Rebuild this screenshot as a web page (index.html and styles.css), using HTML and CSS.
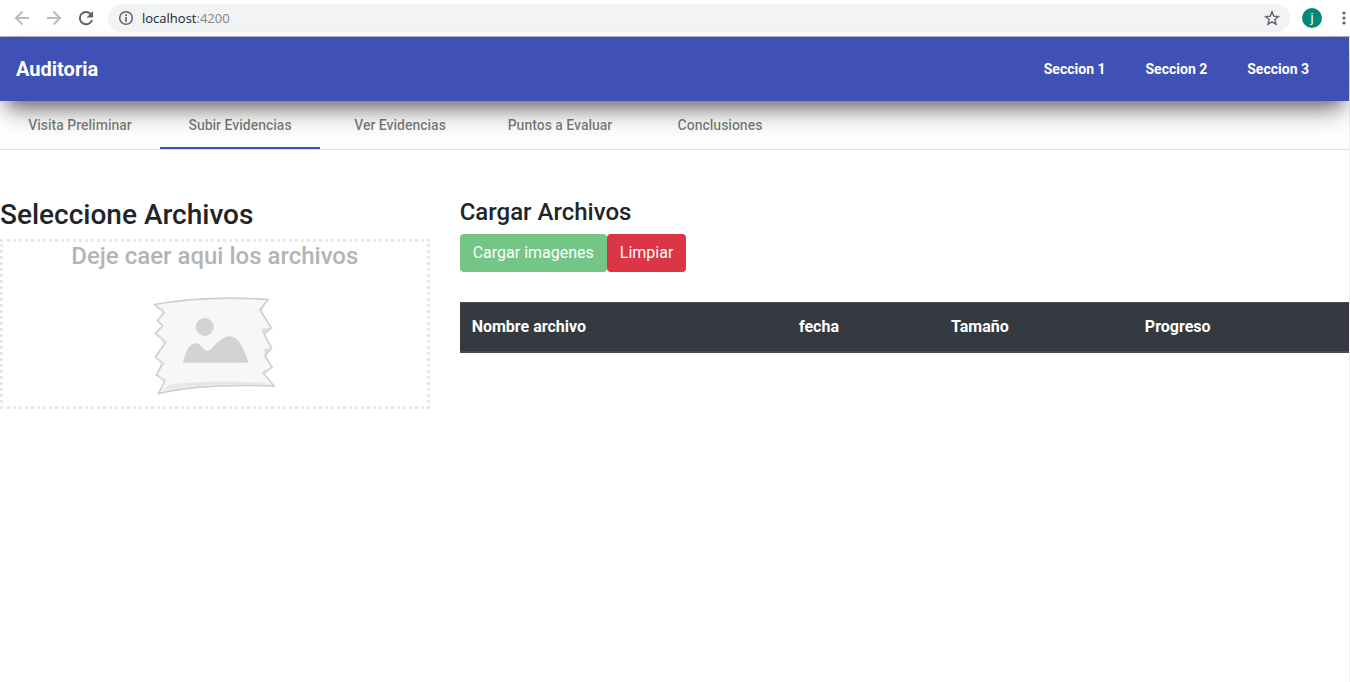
FILE: index.html
```html
<!DOCTYPE html>
<html lang="es">
<head>
<meta charset="utf-8">
<title>Auditoria</title>
<link rel="stylesheet" href="styles.css">
</head>
<body>
<div class="browser">
  <button class="icon-btn" type="button" aria-label="Atrás"><svg width="16" height="16" viewBox="0 0 16 16" fill="none" stroke="#babcbe" stroke-width="2"><path d="M15 8H2.500M8.500 1.500 2 8l6.500 6.500"/></svg></button>
  <button class="icon-btn" type="button" aria-label="Adelante"><svg width="16" height="16" viewBox="0 0 16 16" fill="none" stroke="#babcbe" stroke-width="2"><path d="M1 8h12.500M7.500 1.500 14 8l-6.500 6.500"/></svg></button>
  <button class="icon-btn" type="button" aria-label="Recargar"><svg width="16" height="16" viewBox="0 0 16 16"><path d="M13.200 4.600A6.200 6.200 0 1 0 14 10" fill="none" stroke="#5f6368" stroke-width="2"/><path d="M15 1v6.500H8.500z" fill="#5f6368"/></svg></button>
  <div class="address">
    <svg width="16" height="16" viewBox="0 0 16 16"><circle cx="8" cy="8" r="6.300" fill="none" stroke="#5f6368" stroke-width="1.500"/><path d="M7.200 7h1.700v4.700H7.200zM7.200 4.300h1.700V6H7.200z" fill="#5f6368"/></svg>
    <span class="url">localhost<span class="port">:4200</span></span>
    <button class="star" type="button" aria-label="Marcador"><svg width="16" height="16" viewBox="0 0 16 16" fill="none" stroke="#5f6368" stroke-width="1.400"><path d="m8 1.800 1.800 4.300 4.600.4-3.500 3.100 1.100 4.600L8 11.800l-4 2.400 1.100-4.600L1.600 6.500l4.600-.4z"/></svg></button>
  </div>
  <button class="avatar" type="button">j</button>
  <button class="menu" type="button" aria-label="Menú"><svg width="4" height="14" viewBox="0 0 4 14" fill="#5f6368"><circle cx="2" cy="2" r="1.600"/><circle cx="2" cy="7" r="1.600"/><circle cx="2" cy="12" r="1.600"/></svg></button>
</div>
<div class="page">
  <header class="toolbar">
    <h1 class="brand">Auditoria</h1>
    <nav class="sections">
      <a href="#">Seccion 1</a>
      <a href="#">Seccion 2</a>
      <a href="#">Seccion 3</a>
    </nav>
  </header>
  <nav class="tabs">
    <a class="tab" href="#">Visita Preliminar</a>
    <a class="tab active" href="#">Subir Evidencias</a>
    <a class="tab" href="#">Ver Evidencias</a>
    <a class="tab" href="#">Puntos a Evaluar</a>
    <a class="tab" href="#">Conclusiones</a>
  </nav>
  <main class="content">
    <section>
      <h2 class="title">Seleccione Archivos</h2>
      <div class="dropzone">
        <h3 class="drop-label">Deje caer aqui los archivos</h3>
        <svg class="picture" width="124" height="104" viewBox="0 0 124 104">
          <path d="M1.500 12.500Q55 3 115 7.500L107 18 118.500 36 111 42 118.500 56 112 64 119 75 110.500 81.500 121 94Q50 91 5.500 101.500L12 89 3.500 83 9.500 71.500 2.500 65 12.500 50.500 2.500 41.500 9.500 34 4.500 28.500 11 20.500z" fill="#f7f7f7" stroke="#cfcfcb" stroke-width="1.700"/>
          <path d="M9 99 16 93Q50 87 112 91L118 93Q50 90 9 99z" fill="#e7e7e4"/>
          <path d="m4 13.500 7 4v5zM3.500 41l9 7-1 5zM3.500 65l8 6-2 4zM4.500 83l8 4-1 5zM114 9l-5 9 2 5-4-4zM117 35l-8 2q-1 3 2 5zM118 56l-7 1 1 6zM118 75l-8 4 1 5z" fill="#dededb"/>
          <circle cx="51.700" cy="35" r="9" fill="#d3d3d3"/>
          <path d="M30 70.800C34 52 42 47 49 55 53 60 56 60 60 55 78 35 87 44 95.700 70.800z" fill="#d3d3d3"/>
        </svg>
      </div>
    </section>
    <section class="upload">
      <h3 class="subtitle">Cargar Archivos</h3>
      <div class="actions">
        <button class="btn success" type="button" disabled>Cargar imagenes</button>
        <button class="btn danger" type="button">Limpiar</button>
      </div>
      <table class="files">
        <thead>
          <tr><th class="name">Nombre archivo</th><th class="date">fecha</th><th class="size">Tamaño</th><th>Progreso</th></tr>
        </thead>
      </table>
    </section>
  </main>
</div>
</body>
</html>
```
FILE: styles.css
```css
* { box-sizing: border-box; }
body {
  margin: 0;
  min-height: 100vh;
  display: flex;
  flex-direction: column;
  font: 16px/24px Roboto, sans-serif;
  color: #212529;
  background: #fff;
}
h1, h2, h3 { margin: 0; font-weight: 500; }
button { border: 0; padding: 0; background: none; font: inherit; }
svg { display: block; }
a { text-decoration: none; }

.browser {
  height: 37px;
  display: flex;
  align-items: center;
  gap: 16px;
  padding: 0 4px 1px 14px;
  border-bottom: 1px solid #b0b0b0;
}
.address {
  flex: 1;
  height: 28px;
  display: flex;
  align-items: center;
  gap: 8px;
  margin: 0 -4px 0 -2px;
  padding: 0 10px;
  border-radius: 14px;
  background: #f1f3f4;
  font: 13px/20px "Open Sans", sans-serif;
}
.url { flex: 1; }
.port { color: #80868b; }
.avatar {
  width: 20px;
  height: 20px;
  border-radius: 50%;
  background: #00897b;
  color: #fff;
  font-size: 13px;
  line-height: 20px;
}
.menu { margin-left: 4px; }

.page { flex: 1; border-right: 1px solid #eee; }
.toolbar {
  position: relative;
  height: 64px;
  display: flex;
  align-items: center;
  justify-content: space-between;
  padding: 0 40px 0 16px;
  background: #3f51b5;
  box-shadow: 0 12px 16px -7px rgba(0, 0, 0, .35), 0 16px 28px -6px rgba(0, 0, 0, .36);
}
.brand { color: #fff; font-size: 20px; font-weight: 700; }
.sections { display: flex; gap: 40px; }
.sections a { color: #fff; font-size: 14px; font-weight: 700; }

.tabs { display: flex; border-bottom: 1px solid #e0e0e0; }
.tab {
  position: relative;
  width: 160px;
  height: 48px;
  border-bottom: 2px solid transparent;
  color: rgba(0, 0, 0, .53);
  font-size: 14px;
  font-weight: 500;
  line-height: 48px;
  text-align: center;
}
.active { border-color: #3f51b5; }

.content {
  display: grid;
  grid-template-columns: repeat(3, 1fr);
  gap: 30px;
  padding-top: 48px;
}
.title { margin-bottom: 8px; font-size: 28px; line-height: 33px; }
.dropzone { height: 170px; border: 3px dotted #e8e8e8; }
.drop-label { color: #b4b4b4; font-size: 24px; line-height: 29px; text-align: center; }
.picture { margin: 21px auto 0; }

.upload { grid-column: span 2; }
.subtitle { margin-bottom: 8px; font-size: 24px; line-height: 28px; }
.actions { display: flex; margin-bottom: 30px; }
.btn { height: 38px; padding: 0 13px; border-radius: 4px; color: #fff; }
.success { background: #74c686; }
.danger { background: #dc3545; }
.files { width: 100%; border-collapse: collapse; table-layout: fixed; }
.files th {
  padding: 12px;
  border-top: 1px solid #454d55;
  border-bottom: 2px solid #454d55;
  background: #343a40;
  color: #fff;
  font-weight: 700;
  text-align: left;
}
.name { width: 36.8%; }
.date { width: 17.1%; }
.size { width: 21.8%; }
```
